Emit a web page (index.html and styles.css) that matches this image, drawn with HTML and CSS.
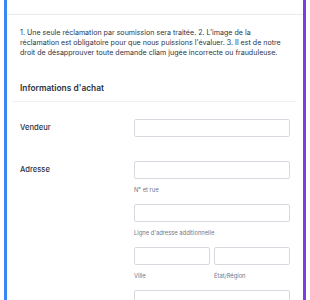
FILE: index.html
```html
<!DOCTYPE html>
<html lang="fr">
<head>
  <meta charset="UTF-8">
  <meta name="viewport" content="width=device-width, initial-scale=1.0">
  <title>Formulaire de réclamation</title>
  <link rel="stylesheet" href="styles.css">
</head>
<body>
  <div class="form-card">
    <div class="form-top"></div>
    <p class="intro">1. Une seule réclamation par soumission sera traitée. 2. L'image de la réclamation est obligatoire pour que nous puissions l'évaluer. 3. Il est de notre droit de désapprouver toute demande cliam jugée incorrecte ou frauduleuse.</p>

    <div class="section">
      <h2>Informations d'achat</h2>
    </div>

    <div class="row">
      <label class="field-label" for="vendeur">Vendeur</label>
      <div class="field">
        <input type="text" id="vendeur">
      </div>
    </div>

    <div class="row">
      <label class="field-label" for="rue">Adresse</label>
      <div class="field">
        <input type="text" id="rue">
        <span class="sublabel">N° et rue</span>
        <input type="text" id="ligne2">
        <span class="sublabel">Ligne d'adresse additionnelle</span>
        <div class="pair">
          <div>
            <input type="text" id="ville">
            <span class="sublabel">Ville</span>
          </div>
          <div>
            <input type="text" id="etat">
            <span class="sublabel">État/Région</span>
          </div>
        </div>
        <input type="text" id="cp">
      </div>
    </div>
  </div>
</body>
</html>
```

FILE: styles.css
```css
body {
  margin: 0;
  font-family: Inter, "Noto Sans", sans-serif;
  background: #fff;
  color: #2c3345;
}
.form-card {
  margin: 0 4px;
  border-left: 3px solid #3a86f5;
  border-right: 3px solid #7a3fe0;
  min-height: 400px;
}
.form-top {
  height: 14px;
  border-bottom: 1px solid #eaebef;
}
.intro {
  margin: 0;
  padding: 13px 18px 0 13px;
  font-size: 7.1px;
  line-height: 10px;
  color: #2c3345;
}
.section {
  margin: 24px 6px 0 5px;
  padding: 0 8px 7px;
  border-bottom: 1px solid #f0f1f4;
}
.section h2 {
  margin: 0;
  font-size: 8.4px;
  font-weight: 600;
  line-height: 12px;
}
.row {
  display: flex;
  padding: 17px 13px 0 13px;
}
.row + .row {
  padding-top: 24px;
}
.field-label {
  width: 114px;
  font-size: 7.6px;
  font-weight: 500;
  line-height: 18px;
}
.field {
  flex: 1;
}
.field input {
  display: block;
  box-sizing: border-box;
  width: 100%;
  height: 18px;
  margin: 0;
  border: 1px solid #d6d9e0;
  border-radius: 2px;
  background: #fff;
}
.sublabel {
  display: block;
  font-size: 5.8px;
  line-height: 7px;
  color: #6f7689;
  margin: 6.5px 0 11.5px;
}
.pair {
  display: flex;
  gap: 4px;
}
.pair > div {
  flex: 1;
}
```
